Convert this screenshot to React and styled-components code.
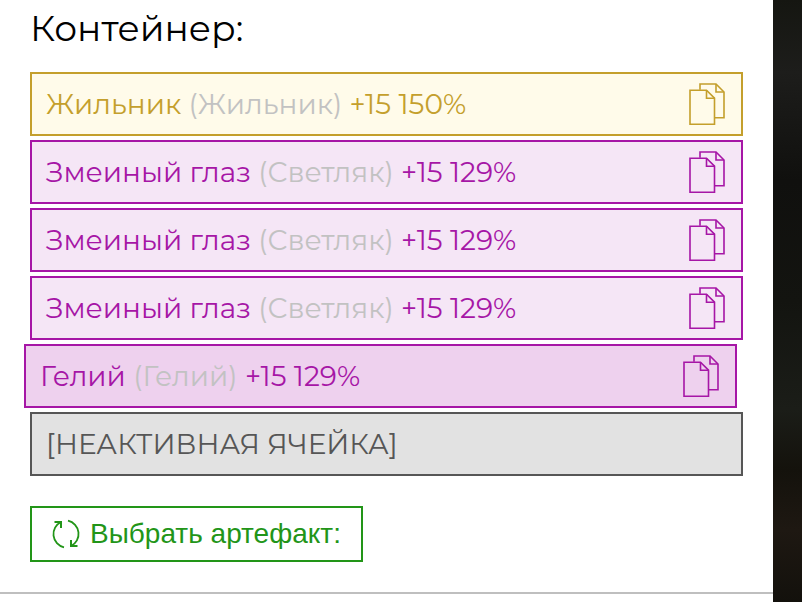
import React from 'react';
import styled, { createGlobalStyle } from 'styled-components';

const GlobalStyle = createGlobalStyle`
  * {
    box-sizing: border-box;
  }

  body {
    margin: 0;
    background: #fff;
    font-family: Montserrat, Inter, "Liberation Sans", sans-serif;
  }
`

const Page = styled.div`
  display: flex;
  min-height: 100vh;
`;

const Panel = styled.main`
  flex: 1;
  min-width: 0;
`;

const Backdrop = styled.aside`
  flex: 0 0 29px;
  background: linear-gradient(180deg, #151611 0%, #1d1d1b 12%, #10100e 30%, #131410 50%, #1b1d18 68%, #14120c 78%, #1e1812 88%, #13110c 100%);
`;

const Container = styled.section`
  padding: 8px 30px 30px;
  border-bottom: 2px solid #bfbfbf;
`;

const Title = styled.h2`
  margin: 0 0 24px;
  font-size: 36px;
  line-height: 40px;
  font-weight: 400;
  color: #000;
`;

const List = styled.ul`
  display: flex;
  flex-direction: column;
  gap: 4px;
  margin: 0 0 30px;
  padding: 0;
  list-style: none;
`;

const tones = {
  gold: { color: '#c49f2c', background: '#fffbea' },
  purple: { color: '#a616a6', background: '#f5e6f6' },
  inactive: { color: '#565656', background: '#e2e2e2' },
}

const Slot = styled.li`
  display: flex;
  align-items: center;
  justify-content: space-between;
  height: 64px;
  padding: 0 16px 0 14px;
  margin: ${({ $active }) => ($active ? '0 6px 0 -6px' : '0')};
  border: 2px solid ${({ $tone }) => tones[$tone].color};
  color: ${({ $tone }) => tones[$tone].color};
  background: ${({ $tone, $active }) => ($active ? '#eed1ee' : tones[$tone].background)};
  font-size: 28px;
  line-height: 36px;
`;

const Base = styled.span`
  color: #c2c2c2;
`;

const CopyButton = styled.button`
  display: flex;
  padding: 0;
  border: none;
  background: none;
  color: inherit;
  cursor: pointer;
`;

const SelectButton = styled.button`
  display: flex;
  align-items: center;
  gap: 9px;
  height: 56px;
  padding: 0 20px 0 19px;
  border: 2px solid #229518;
  background: #fff;
  color: #229518;
  font-family: "Liberation Sans", Arial, sans-serif;
  font-size: 28px;
  cursor: pointer;
`;

const CopyIcon = () => (
  <svg width="37" height="44" viewBox="0 0 37 44" fill="none" stroke="currentColor" strokeWidth="1.6" aria-hidden="true">
    <path d="M12 7.800V2H28l8 8v25.800h-9.500" />
    <path d="M28 2v8h8" />
    <path d="M2 8.200H18.500l8 8v26H2z" />
    <path d="M18.500 8.200v8h8" />
  </svg>
)

const RefreshIcon = () => (
  <svg width="30" height="30" viewBox="0 0 30 30" fill="none" stroke="currentColor" strokeWidth="1.8" aria-hidden="true">
    <path d="M13 28.300A13.500 13.500 0 0 1 10 3" />
    <path d="M17 1.700A13.500 13.500 0 0 1 20 27" />
    <path d="M3.500 3h6.500V9M26.500 27h-6.500V21" strokeWidth="2" />
  </svg>
)

const items = [
  { name: 'Жильник', base: 'Жильник', level: '+15', percent: '150%', tone: 'gold' },
  { name: 'Змеиный глаз', base: 'Светляк', level: '+15', percent: '129%', tone: 'purple' },
  { name: 'Змеиный глаз', base: 'Светляк', level: '+15', percent: '129%', tone: 'purple' },
  { name: 'Змеиный глаз', base: 'Светляк', level: '+15', percent: '129%', tone: 'purple' },
  { name: 'Гелий', base: 'Гелий', level: '+15', percent: '129%', tone: 'purple', active: true },
]

const App = () => {
  return (
    <>
      <GlobalStyle />
      <Page>
        <Panel>
          <Container>
            <Title>Контейнер:</Title>
            <List>
              {items.map((item, i) => (
                <Slot key={i} $tone={item.tone} $active={item.active}>
                  <span>
                    {item.name} <Base>({item.base})</Base> {item.level} {item.percent}
                  </span>
                  <CopyButton type="button" aria-label={`Копировать ${item.name}`}>
                    <CopyIcon />
                  </CopyButton>
                </Slot>
              ))}
              <Slot $tone="inactive">[НЕАКТИВНАЯ ЯЧЕЙКА]</Slot>
            </List>
            <SelectButton type="button">
              <RefreshIcon />
              Выбрать артефакт:
            </SelectButton>
          </Container>
        </Panel>
        <Backdrop />
      </Page>
    </>
  )
}

export default App;
